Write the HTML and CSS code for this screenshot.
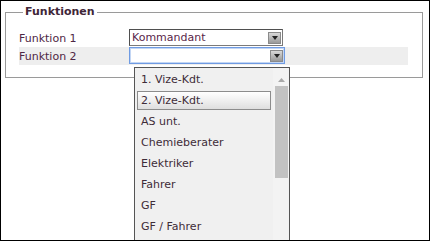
FILE: index.html
```html
<!DOCTYPE html>
<html>
<head>
<meta charset="utf-8">
<link rel="stylesheet" href="styles.css">
</head>
<body>
<div class="frame">
  <fieldset class="group">
    <legend class="group-title">Funktionen</legend>
    <div class="row">
      <span class="label">Funktion 1</span>
      <div class="select">
        <span class="select-value">Kommandant</span>
        <span class="select-btn"><svg width="6" height="4" viewBox="0 0 6 4"><path d="M0 0H6L3 4Z" fill="#222"/></svg></span>
      </div>
    </div>
    <div class="row row-alt">
      <span class="label">Funktion 2</span>
      <div class="select select-focus">
        <span class="select-value"></span>
        <span class="select-btn"><svg width="6" height="4" viewBox="0 0 6 4"><path d="M0 0H6L3 4Z" fill="#222"/></svg></span>
      </div>
    </div>
  </fieldset>
  <div class="dropdown">
    <ul class="options">
      <li class="option"><span class="opt">1. Vize-Kdt.</span></li>
      <li class="option"><span class="opt opt-hover">2. Vize-Kdt.</span></li>
      <li class="option"><span class="opt">AS unt.</span></li>
      <li class="option"><span class="opt">Chemieberater</span></li>
      <li class="option"><span class="opt">Elektriker</span></li>
      <li class="option"><span class="opt">Fahrer</span></li>
      <li class="option"><span class="opt">GF</span></li>
      <li class="option"><span class="opt">GF / Fahrer</span></li>
    </ul>
    <div class="scrollbar">
      <svg class="scroll-up" width="7" height="4" viewBox="0 0 7 4"><path d="M0 4H7L3.5 0Z" fill="#a8a8a8"/></svg>
      <div class="thumb"></div>
    </div>
  </div>
</div>
</body>
</html>
```

FILE: styles.css
```css
html, body {
  margin: 0;
  padding: 0;
  background: #fff;
}
.frame {
  position: relative;
  width: 430px;
  height: 241px;
  box-sizing: border-box;
  border: 1px solid #000;
  overflow: hidden;
  background: #fff;
  font-family: "DejaVu Sans", Verdana, sans-serif;
  font-size: 11px;
}
.group {
  box-sizing: border-box;
  width: 418px;
  height: 73px;
  margin: 4px 0 0 4px;
  padding: 10px 14px 0 13px;
  border: 1px solid #9a9a9a;
  min-width: 0;
}
.group-title {
  margin-left: 4px;
  padding: 0 2px;
  font-weight: bold;
  color: #3f2638;
  line-height: 14px;
}
.row {
  display: flex;
  align-items: flex-start;
  height: 18px;
}
.row-alt {
  background: #eeeeee;
}
.label {
  width: 110px;
  flex: none;
  color: #4e2744;
  line-height: 17px;
  padding-top: 1px;
}
.select {
  box-sizing: border-box;
  width: 154px;
  height: 17px;
  display: flex;
  align-items: center;
  justify-content: space-between;
  background: #fff;
  border: 1px solid #7a7a7a;
  border-top-color: #4f4f4f;
  border-left-color: #4f4f4f;
  padding: 0 1px 0 2px;
}
.select-focus {
  width: 156px;
  border: 1px solid #6f9be3;
  box-shadow: inset 0 0 0 1px #c3d6f4;
}
.select-value {
  color: #5a1f4a;
  line-height: 15px;
}
.select-btn {
  box-sizing: border-box;
  width: 13px;
  height: 12px;
  display: flex;
  align-items: center;
  justify-content: center;
  background: linear-gradient(#d8d8d8, #9a9a9a);
  border: 1px solid #8a8a8a;
}
.dropdown {
  position: absolute;
  left: 133px;
  top: 66px;
  width: 156px;
  height: 200px;
  box-sizing: border-box;
  border: 1px solid #555;
  background: #f0f0f0;
  display: flex;
}
.options {
  list-style: none;
  margin: 0;
  padding: 0;
  flex: 1;
}
.option {
  height: 21px;
  box-sizing: border-box;
  padding: 2px 2px 0 2px;
}
.opt {
  display: block;
  box-sizing: border-box;
  height: 19px;
  line-height: 17px;
  padding-left: 3px;
  border: 1px solid transparent;
  color: #3e2c38;
}
.opt-hover {
  border-color: #8c8c8c;
  background: linear-gradient(#ffffff, #ececec 60%, #dedede);
}
.scrollbar {
  width: 16px;
  flex: none;
  background: #f3f3f3;
  display: flex;
  flex-direction: column;
  align-items: center;
}
.scroll-up {
  margin-top: 10px;
  margin-left: 1px;
}
.thumb {
  width: 13px;
  height: 92px;
  margin-top: 4px;
  background: #c2c2c2;
}
```
